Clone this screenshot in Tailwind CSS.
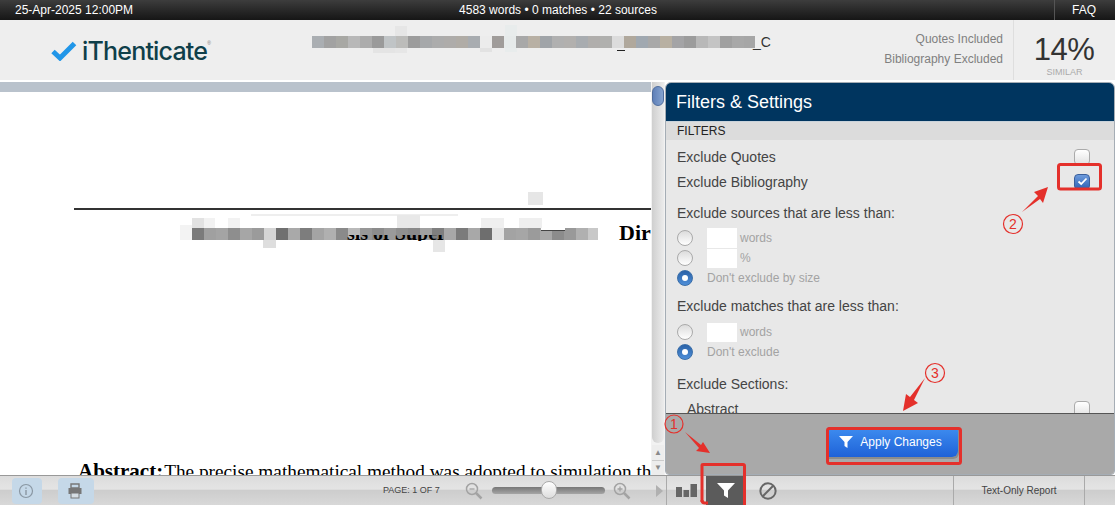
<!DOCTYPE html>
<html lang="en">
<head>
    <meta charset="UTF-8">
    <title>iThenticate</title>
    <script src="https://cdn.jsdelivr.net/npm/@tailwindcss/browser@4"></script>
</head>
<body class="w-[1115px] h-[505px] overflow-hidden relative bg-white font-['Liberation_Sans',Arial,sans-serif]">

    <!-- top bar -->
    <div class="h-5 flex items-center text-white text-xs bg-gradient-to-b from-[#3d3d3d] to-[#161616]">
        <div class="w-[290px] pl-[15px]">25-Apr-2025 12:00PM</div>
        <div class="w-[536px] text-center">4583 words • 0 matches • 22 sources</div>
        <div class="flex-1"></div>
        <div class="w-[61px] h-5 border-l border-[#555] flex items-center justify-center pr-[2px]">FAQ</div>
    </div>

    <!-- header -->
    <div class="h-[62px] flex bg-[#eeeeee] border-b-2 border-white">
        <div class="w-[300px] flex items-center pl-[51px] pt-[2px]">
            <svg width="26" height="20" viewBox="0 0 26 20"><path d="M2 10.5 L9 17 L23.5 2.5" fill="none" stroke="#2196e8" stroke-width="5"/></svg>
            <span class="text-[25px] leading-none tracking-[-0.8px] text-[#0f3f4a] font-['Inter',sans-serif] font-medium ml-[5px]">iThenticate</span>
            <span class="text-[5px] text-[#777] -mt-[14px]">®</span>
        </div>
        <div class="flex-1 relative">
            <!-- blurred file name -->
            <div class="absolute left-[95px] top-[28px] w-[12px] h-[5px] bg-[#e6e6e6]"></div>
            <div class="absolute left-[73px] top-[28px] w-[22px] h-[5px] bg-[#e4e4e4]"></div>
            <div class="absolute left-[95px] top-[6px] w-[12px] h-[10px] bg-[#e6e6e6]"></div>
            <div class="absolute left-[205px] top-[5px] w-[12px] h-[27px] bg-[#e8ecec]"></div>
            <div class="absolute left-[180px] top-[28px] w-[12px] h-[4px] bg-[#e2e2e2]"></div>
            <div class="absolute left-[317px] top-[30px] w-[8px] h-[1px] bg-[#222]"></div>
            <div class="absolute left-[12px] top-[16px] h-3 flex">
                <div class="w-3 bg-[#aaaeb2]"></div><div class="w-3 bg-[#a2a2a2]"></div><div class="w-3 bg-[#a8a8a4]"></div><div class="w-3 bg-[#b8b8b8]"></div><div class="w-3 bg-[#acacac]"></div><div class="w-3 bg-[#9a9a9a]"></div><div class="w-3 bg-[#c0c4c6]"></div><div class="w-3 bg-[#bcbcba]"></div><div class="w-3 bg-[#9c9c9c]"></div><div class="w-3 bg-[#a6a8aa]"></div><div class="w-3 bg-[#acacac]"></div><div class="w-3 bg-[#aeacaa]"></div><div class="w-3 bg-[#b0aca6]"></div><div class="w-3 bg-[#a8acb0]"></div><div class="w-3 bg-[#ececec]"></div><div class="w-3 bg-[#a09c9a]"></div><div class="w-3 bg-[#e6eaea]"></div><div class="w-3 bg-[#a8a8a8]"></div><div class="w-3 bg-[#b8b0a4]"></div><div class="w-3 bg-[#a0a4a8]"></div><div class="w-3 bg-[#b0b0b0]"></div><div class="w-3 bg-[#b2b0ae]"></div><div class="w-3 bg-[#a8acb0]"></div><div class="w-3 bg-[#b0aeac]"></div><div class="w-3 bg-[#b0b0ae]"></div><div class="w-3 bg-[#dcdcdc]"></div><div class="w-3 bg-[#b0a89c]"></div><div class="w-3 bg-[#a0a8b0]"></div><div class="w-3 bg-[#a8a8a8]"></div><div class="w-3 bg-[#b8b0a2]"></div><div class="w-3 bg-[#a4a4a6]"></div><div class="w-3 bg-[#9c9c9c]"></div><div class="w-3 bg-[#b8b8b8]"></div><div class="w-3 bg-[#c4c4c4]"></div><div class="w-3 bg-[#a0a0a0]"></div><div class="w-3 bg-[#a8a8a8]"></div><div class="w-[11px] bg-[#a6a6a6]"></div>
            </div>
            <div class="absolute left-[453px] top-[12px] text-sm text-[#333]">_C</div>
        </div>
        <div class="w-[213px] text-right pr-[10px] pt-[9px] text-xs leading-5 text-[#808080]">
            <div>Quotes Included</div>
            <div>Bibliography Excluded</div>
        </div>
        <div class="w-[102px] border-l border-[#dedede] text-center pt-[15px]">
            <div class="text-[31px] leading-[30px] tracking-[-0.5px] text-[#333] -ml-[1px]">14%</div>
            <div class="text-[9px] leading-[10px] mt-[2px] text-[#aaa]">SIMILAR</div>
        </div>
    </div>

    <!-- main area -->
    <div class="h-[393px] flex">
        <!-- document -->
        <div class="w-[651px] relative overflow-hidden bg-white">
            <div class="h-[10px] bg-[#b9c2cc]"></div>
            <div class="absolute left-[528px] top-[110px] w-[15px] h-[13px] bg-[#e6e6e6]"></div>
            <div class="absolute left-[74px] top-[126px] right-0 h-[2px] bg-[#333]"></div>
            <!-- blurred title, pale smears round it -->
            <div class="absolute left-[251px] top-[132px] w-[207px] h-[2px] bg-[#eeeeee]"></div>
            <div class="absolute left-[180px] top-[143px] w-[12px] h-[15px] bg-[#f3f3f3]"></div>
            <div class="absolute left-[192px] top-[136px] w-[12px] h-[10px] bg-[#e2e2e2]"></div>
            <div class="absolute left-[204px] top-[136px] w-[11px] h-[10px] bg-[#f2f2f2]"></div>
            <div class="absolute left-[228px] top-[136px] w-[12px] h-[10px] bg-[#f2f2f2]"></div>
            <div class="absolute left-[397px] top-[133px] w-[23px] h-[13px] bg-[#e8e8e8]"></div>
            <div class="absolute left-[481px] top-[136px] w-[23px] h-[10px] bg-[#efefef]"></div>
            <div class="absolute left-[519px] top-[136px] w-[23px] h-[10px] bg-[#efefef]"></div>
            <div class="absolute left-[263px] top-[158px] w-[13px] h-[8px] bg-[#dedede]"></div>
            <div class="absolute left-[433px] top-[158px] w-[12px] h-[12px] bg-[#e6e6e6]"></div>
            <div class="absolute left-[192px] top-[146px] h-3 flex">
                <div class="w-3 bg-[#7b7b7b]"></div><div class="w-3 bg-[#a0a0a0]"></div><div class="w-3 bg-[#a4a4a4]"></div><div class="w-3 bg-[#8e8e8e]"></div><div class="w-3 bg-[#a6a6a6]"></div><div class="w-3 bg-[#9b9b9b]"></div><div class="w-3 bg-[#d5d5d5]"></div><div class="w-3 bg-[#707070]"></div><div class="w-3 bg-[#a9a9a9]"></div><div class="w-3 bg-[#7d7d7d]"></div><div class="w-3 bg-[#a4a4a4]"></div><div class="w-3 bg-[#b0b0b0]"></div><div class="w-3 bg-[#8a8a8a]"></div><div class="w-3 bg-[#b9b9b9]"></div><div class="w-3 bg-[#979797]"></div><div class="w-3 bg-[#8c8c8c]"></div><div class="w-3 bg-[#9a9a9a]"></div><div class="w-3 bg-[#8f8f8f]"></div><div class="w-3 bg-[#8a8a8a]"></div><div class="w-3 bg-[#a0a0a0]"></div><div class="w-3 bg-[#7f7f7f]"></div><div class="w-3 bg-[#a8a8a8]"></div><div class="w-3 bg-[#7b7b7b]"></div><div class="w-3 bg-[#a8a8a8]"></div><div class="w-3 bg-[#6e6e6e]"></div><div class="w-3 bg-[#e3e3e3]"></div><div class="w-3 bg-[#a3a3a3]"></div><div class="w-3 bg-[#a6a6a6]"></div><div class="w-3 bg-[#9b9b9b]"></div><div class="w-3 bg-[#a8a8a8]"></div><div class="w-3 bg-[#8c8c8c]"></div><div class="w-3 bg-[#999999]"></div><div class="w-3 bg-[#b0b0b0]"></div><div class="w-[10px] bg-[#c8c8c8]"></div>
            </div>
            <!-- only the bottom of these letters shows under the blur -->
            <div class="absolute left-[347px] top-[153px] h-[6px] w-[116px] overflow-hidden">
                <div class="-mt-[12px] text-[20px] leading-[20px] font-bold text-black whitespace-nowrap font-['Liberation_Serif',serif]">sis of Super</div>
            </div>
            <div class="absolute left-[541px] top-[146px] w-[24px] h-[3px] bg-white border-b border-[#444]"></div>
            <div class="absolute left-[619px] top-[140px] text-[22px] leading-none font-bold text-black font-['Liberation_Serif',serif]">Dir</div>
            <div class="absolute left-[78px] top-[379px] flex items-baseline whitespace-nowrap leading-none text-black font-['Liberation_Serif',serif]">
                <b class="text-[21px]">Abstract:</b><span class="text-[19.3px] ml-[1px]">The precise mathematical method was adopted to simulation th</span>
            </div>
        </div>

        <!-- doc scrollbar -->
        <div class="w-[14px] pl-[1px] bg-[#f2f2f2] flex flex-col items-start">
            <div class="w-[12px] h-[361px] rounded-b-md bg-gradient-to-r from-[#cfcfcf] to-[#ececec] pt-[4px]">
                <div class="w-[12px] h-[20px] rounded-md bg-gradient-to-r from-[#5f80b8] to-[#85a3d0] border border-[#4f6d9e]"></div>
            </div>
            <div class="mt-[2px] w-[12px] bg-[#ededed] text-[#8a8a8a] text-[8px]">
                <div class="h-[15px] flex items-center justify-center">▲</div>
                <div class="h-[15px] flex items-center justify-center border-t border-[#ccc]">▼</div>
            </div>
        </div>

        <!-- filters panel -->
        <div class="w-[450px] h-[393px] flex flex-col border border-[#a5adb5] rounded-t-md rounded-b-sm overflow-hidden bg-[#e8e8e8]">
            <div class="h-[38px] shrink-0 bg-[#00355f] text-white text-lg flex items-center pl-[10px]">Filters &amp; Settings</div>
            <div class="h-[19px] shrink-0 bg-[#dcdcdc] text-xs text-[#222] flex items-center pl-[11px] border-t border-[#c9d3db]">FILTERS</div>
            <div class="flex-1 overflow-hidden pl-[11px] pr-[24px] pt-[4px] text-sm text-[#444]">
                <div class="h-[25px] flex items-center justify-between">
                    <span>Exclude Quotes</span>
                    <span class="w-4 h-4 rounded-[4px] bg-gradient-to-b from-[#fff] to-[#e2e2e2] border border-[#aaa]"></span>
                </div>
                <div class="h-[25px] flex items-center justify-between">
                    <span>Exclude Bibliography</span>
                    <span class="w-4 h-4 rounded-[4px] bg-gradient-to-b from-[#6d9bdc] to-[#2f62b5] border border-[#3a5f9c] flex items-center justify-center">
                        <svg width="11" height="9" viewBox="0 0 11 9"><path d="M1.5 4.5 L4.2 7 L9.5 1.5" fill="none" stroke="#fff" stroke-width="1.8"/></svg>
                    </span>
                </div>
                <div class="mt-[9px] h-5 leading-5">Exclude sources that are less than:</div>
                <div class="mt-[5px] text-xs text-[#a3a3a3]">
                    <div class="h-5 flex items-center">
                        <span class="w-4 h-4 rounded-full bg-gradient-to-b from-[#dcdcdc] to-[#fff] border border-[#aaa]"></span>
                        <span class="w-[30px] h-[20px] bg-white ml-[14px]"></span><span class="ml-[3px]">words</span>
                    </div>
                    <div class="h-5 flex items-center">
                        <span class="w-4 h-4 rounded-full bg-gradient-to-b from-[#dcdcdc] to-[#fff] border border-[#aaa]"></span>
                        <span class="w-[30px] h-[19px] bg-white ml-[14px]"></span><span class="ml-[3px]">%</span>
                    </div>
                    <div class="h-5 flex items-center">
                        <span class="w-4 h-4 rounded-full bg-gradient-to-b from-[#2a62a8] to-[#4f8fd8] border border-[#3a6ea8] flex items-center justify-center"><span class="w-[6px] h-[6px] rounded-full bg-white"></span></span>
                        <span class="ml-[14px]">Don't exclude by size</span>
                    </div>
                </div>
                <div class="mt-[8px] h-5 leading-5">Exclude matches that are less than:</div>
                <div class="mt-[6px] text-xs text-[#a3a3a3]">
                    <div class="h-5 flex items-center">
                        <span class="w-4 h-4 rounded-full bg-gradient-to-b from-[#dcdcdc] to-[#fff] border border-[#aaa]"></span>
                        <span class="w-[30px] h-[19px] bg-white ml-[14px]"></span><span class="ml-[3px]">words</span>
                    </div>
                    <div class="h-5 flex items-center">
                        <span class="w-4 h-4 rounded-full bg-gradient-to-b from-[#2a62a8] to-[#4f8fd8] border border-[#3a6ea8] flex items-center justify-center"><span class="w-[6px] h-[6px] rounded-full bg-white"></span></span>
                        <span class="ml-[14px]">Don't exclude</span>
                    </div>
                </div>
                <div class="mt-[12px] h-5 leading-5">Exclude Sections:</div>
                <div class="mt-[2px] h-[25px] flex items-center justify-between pl-[10px]">
                    <span>Abstract</span>
                    <span class="w-4 h-4 rounded-[4px] bg-gradient-to-b from-[#fff] to-[#e2e2e2] border border-[#aaa]"></span>
                </div>
            </div>
            <div class="h-[61px] shrink-0 bg-[#a9a9a9] border-t border-[#555] flex items-center justify-center pb-[4px]">
                <div class="w-[130px] h-[30px] pr-[4px] ml-[5px] rounded-br-md shadow-[1px_2px_0_#8c8c8c] bg-gradient-to-b from-[#3f8df0] to-[#1f62d8] text-white text-xs flex items-center justify-center gap-[7px]">
                    <svg width="14" height="12" viewBox="0 0 14 12"><path d="M0 0 H14 L8.5 6 V12 L5.5 10 V6 Z" fill="#fff"/></svg>
                    <span>Apply Changes</span>
                </div>
            </div>
        </div>
    </div>

    <!-- bottom toolbar -->
    <div class="w-[1115px] h-[30px] flex bg-[linear-gradient(to_bottom,#dcdcdc_0%,#e4e4e4_45%,#cdcdcd_50%,#d8d8d8_100%)] border-t border-[#999] text-[9px] text-[#444]">
        <div class="w-[656px] flex items-center">
            <div class="ml-[12px] w-[30px] h-[26px] pr-[2px] rounded bg-[#c5d8e8] flex items-center justify-center">
                <svg width="16" height="16" viewBox="0 0 16 16"><circle cx="8" cy="8" r="6.5" fill="none" stroke="#8a97a3" stroke-width="1.2"/><path d="M8 7 V12 M8 4.5 V5.8" stroke="#8a97a3" stroke-width="1.4"/></svg>
            </div>
            <div class="ml-[16px] w-[36px] h-[26px] pr-[3px] rounded bg-[#c5d8e8] flex items-center justify-center">
                <svg width="16" height="16" viewBox="0 0 16 16"><path d="M4 1 H12 V5 H4 Z" fill="none" stroke="#777" stroke-width="1.4"/><rect x="1.5" y="5" width="13" height="6" fill="#777"/><rect x="4" y="10" width="8" height="5" fill="#d5dde3" stroke="#777"/></svg>
            </div>
            <div class="ml-[289px] w-[57px] whitespace-nowrap">PAGE: 1 OF 7</div>
            <svg class="ml-[25px]" width="18" height="18" viewBox="0 0 18 18"><circle cx="7" cy="7" r="5.5" fill="none" stroke="#a3a3a3" stroke-width="1.5"/><path d="M4.5 7 H9.5" stroke="#a3a3a3" stroke-width="1.3"/><path d="M11 11 L16.5 16.5" stroke="#a3a3a3" stroke-width="2.5"/></svg>
            <div class="ml-[9px] relative w-[113px] h-[7px] rounded-full bg-gradient-to-b from-[#777] to-[#a5a5a5]">
                <div class="absolute left-[49px] -top-[6px] w-4 h-[18px] rounded-full bg-gradient-to-b from-[#fff] to-[#ddd] border border-[#aaa]"></div>
            </div>
            <svg class="ml-[8px]" width="18" height="18" viewBox="0 0 18 18"><circle cx="7" cy="7" r="5.5" fill="none" stroke="#a3a3a3" stroke-width="1.5"/><path d="M4.5 7 H9.5 M7 4.5 V9.5" stroke="#a3a3a3" stroke-width="1.3"/><path d="M11 11 L16.5 16.5" stroke="#a3a3a3" stroke-width="2.5"/></svg>
        </div>
        <div class="w-[10px] flex items-center"><svg width="7" height="12" viewBox="0 0 7 12"><path d="M0 0 L7 6 L0 12 Z" fill="#b0b0b0"/></svg></div>
        <div class="flex-1 flex items-center border-l border-[#aaa]">
            <svg class="ml-[9px]" width="21" height="13" viewBox="0 0 21 13"><path d="M0 3 H6 V13 H0 Z M7.5 6 H13 V13 H7.5 Z M14.5 0 H21 V13 H14.5 Z" fill="#666"/></svg>
            <div class="ml-[9px] w-10 h-[29px] bg-[#5b5b5b] flex items-center justify-center">
                <svg width="18" height="15" viewBox="0 0 18 15"><path d="M0 0 H18 L11 7.5 V15 L7 12.5 V7.5 Z" fill="#fff"/></svg>
            </div>
            <svg class="ml-[13px]" width="18" height="18" viewBox="0 0 20 20"><circle cx="10" cy="10" r="8.5" fill="none" stroke="#666" stroke-width="2.2"/><path d="M4.5 15.5 L15.5 4.5" stroke="#666" stroke-width="2.2"/></svg>
            <div class="ml-[176px] w-[132px] h-[29px] border-x border-[#aaa] flex items-center justify-center text-[10px] text-[#444]">Text-Only Report</div>
        </div>
    </div>

    <!-- hand-drawn annotations over the screenshot -->
    <svg class="absolute left-0 top-0 pointer-events-none" width="1115" height="505" viewBox="0 0 1115 505">
        <rect x="1058.5" y="164.5" width="42" height="24.5" rx="2" fill="none" stroke="#e4302b" stroke-width="3"/>
        <rect x="827.5" y="428.5" width="133" height="35" rx="2" fill="none" stroke="#e4302b" stroke-width="3"/>
        <path d="M702 502 V465 Q702 464.5 703 464.5 H743 Q744.500 464.500 744.500 466 V505" fill="none" stroke="#e4302b" stroke-width="3"/>
        <path d="M702 500 Q702 503 705 503 H708" fill="none" stroke="#e4302b" stroke-width="3"/>
        <path d="M1022 212 L1038 196 L1034 192 L1048 187 L1043 203 L1040 199 Z" fill="#e4302b"/>
        <path d="M925 378 L910 397 L906 394 L903 411 L918 403 L914 400 Z" fill="#e4302b"/>
        <path d="M685 432 L701 445 L703 442 L710 453 L696 451 L699 448 Z" fill="#e4302b"/>
        <g fill="none" stroke="#e4302b" stroke-width="1.2"><circle cx="1013" cy="224" r="9.5"/><circle cx="935" cy="373" r="9.5"/><circle cx="674" cy="424" r="9"/></g>
        <g fill="#e4302b" font-size="14" text-anchor="middle" font-family="Liberation Sans">
            <text x="1013" y="229">2</text><text x="935" y="378">3</text><text x="674" y="429">1</text>
        </g>
    </svg>
</body>
</html>
